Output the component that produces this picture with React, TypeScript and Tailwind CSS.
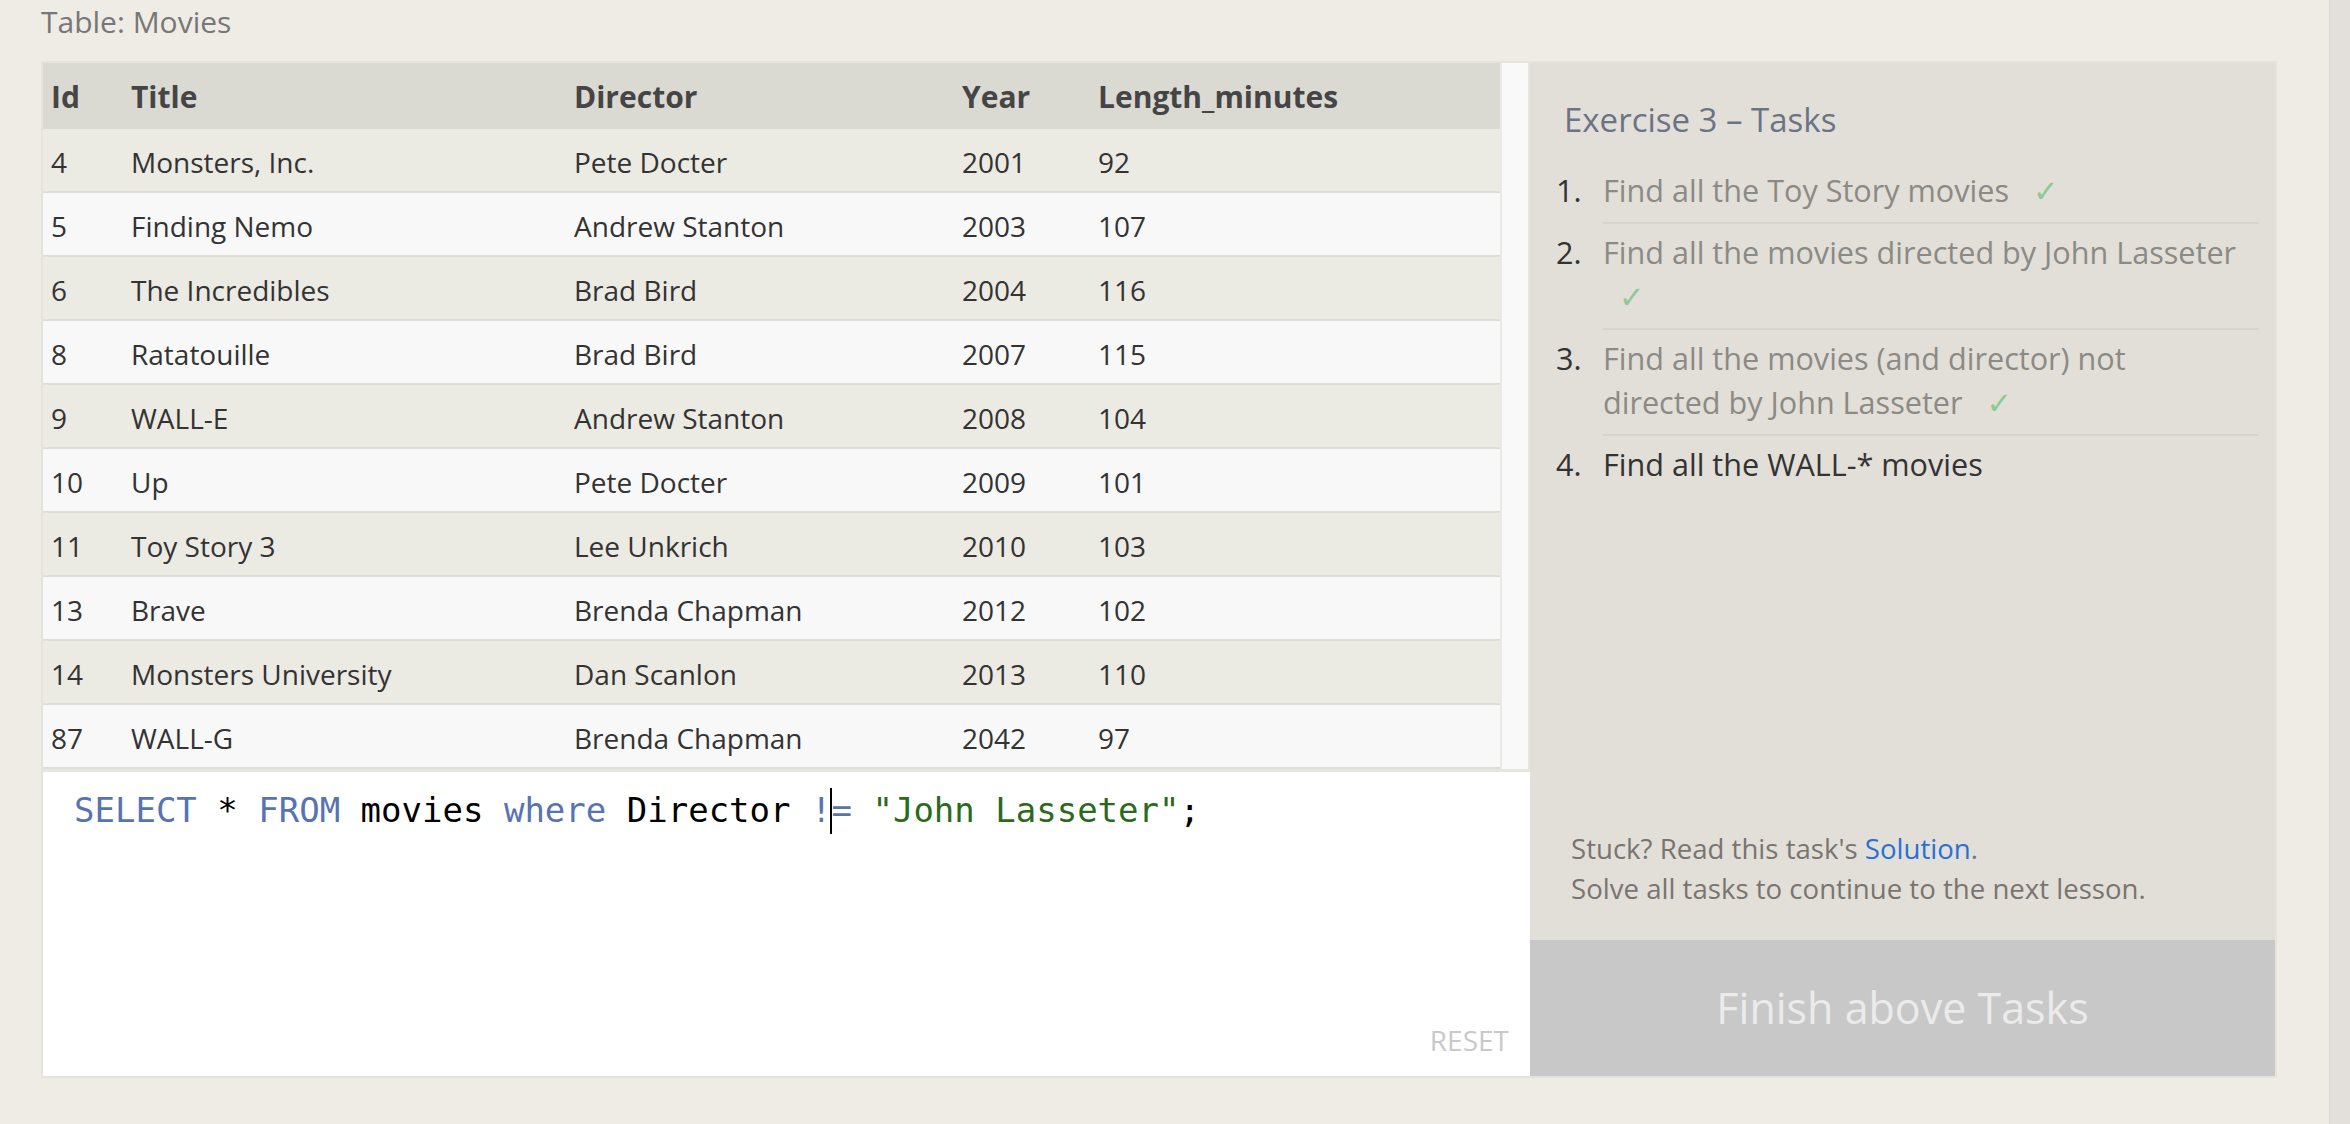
import React from 'react';

const sans = { fontFamily: '"Open Sans", "Noto Sans", sans-serif' };

const movies = [
  { id: 4, title: 'Monsters, Inc.', director: 'Pete Docter', year: 2001, len: 92 },
  { id: 5, title: 'Finding Nemo', director: 'Andrew Stanton', year: 2003, len: 107 },
  { id: 6, title: 'The Incredibles', director: 'Brad Bird', year: 2004, len: 116 },
  { id: 8, title: 'Ratatouille', director: 'Brad Bird', year: 2007, len: 115 },
  { id: 9, title: 'WALL-E', director: 'Andrew Stanton', year: 2008, len: 104 },
  { id: 10, title: 'Up', director: 'Pete Docter', year: 2009, len: 101 },
  { id: 11, title: 'Toy Story 3', director: 'Lee Unkrich', year: 2010, len: 103 },
  { id: 13, title: 'Brave', director: 'Brenda Chapman', year: 2012, len: 102 },
  { id: 14, title: 'Monsters University', director: 'Dan Scanlon', year: 2013, len: 110 },
  { id: 87, title: 'WALL-G', director: 'Brenda Chapman', year: 2042, len: 97 },
];

const tasks = [
  { text: 'Find all the Toy Story movies', done: true },
  { text: 'Find all the movies directed by John Lasseter', done: true },
  { text: 'Find all the movies (and director) not directed by John Lasseter', done: true },
  { text: 'Find all the WALL-* movies', done: false },
];

function MoviesTable() {
  return (
    <div className="w-[1457px] shrink-0 text-[28px] text-[#333]">
      <div className="grid h-[66px] grid-cols-[80px_443px_388px_136px_1fr] items-center bg-[#dbdad2] text-[30px] font-bold text-[#454545]">
        <div className="pl-[8px]">Id</div>
        <div className="pl-[8px]">Title</div>
        <div className="pl-[8px]">Director</div>
        <div className="pl-[8px]">Year</div>
        <div className="pl-[8px]">Length_minutes</div>
      </div>
      {movies.map((m, i) => (
        <div
          key={m.id}
          className={
            'grid h-[64px] grid-cols-[80px_443px_388px_136px_1fr] items-center border-b-2 border-[#dfded8] pt-[4px] ' +
            (i % 2 === 0 ? 'bg-[#ebeae3]' : 'bg-[#f8f8f8]')
          }
        >
          <div className="pl-[8px]">{m.id}</div>
          <div className="pl-[8px]">{m.title}</div>
          <div className="pl-[8px]">{m.director}</div>
          <div className="pl-[8px]">{m.year}</div>
          <div className="pl-[8px]">{m.len}</div>
        </div>
      ))}
    </div>
  );
}

function Editor() {
  return (
    <div className="flex flex-1 flex-col border-t-[3px] border-[#e6e5de] bg-white">
      <div
        className="pl-[31px] pt-[14px] text-[34px] leading-[48px] whitespace-pre text-black"
        style={{ fontFamily: '"DejaVu Sans Mono", monospace' }}
      >
        <span className="text-[#5873b3]">SELECT</span> * <span className="text-[#5873b3]">FROM</span> movies{' '}
        <span className="text-[#5873b3]">where</span> Director <span className="text-[#5873b3]">!</span>
        <span className="relative inline-block h-[48px] w-0 align-top">
          <span className="absolute left-[-1px] top-[2px] h-[46px] w-[2px] bg-black" />
        </span>
        <span className="text-[#5873b3]">=</span> <span className="text-[#2b6a1d]">"John Lasseter"</span>;
      </div>
      <div className="mt-auto self-end pr-[21px] pb-[17px] text-[28px] leading-[38px] text-[#c9c9c9]">RESET</div>
    </div>
  );
}

function TaskPanel() {
  return (
    <div className="flex w-[745px] shrink-0 flex-col bg-[#e1dfd8]">
      <div className="pl-[34px] pt-[35px] text-[33px] leading-[44px] text-[#6c7384]">Exercise 3 – Tasks</div>
      <ol className="mt-[20px] pr-[16px]">
        {tasks.map((t, i) => (
          <li key={i} className="flex text-[30.6px] leading-[44px]">
            <span className="w-[73px] shrink-0 pt-[6px] pl-[26px] text-[#333]">{i + 1}.</span>
            <div
              className={
                'flex-1 pt-[6px] pb-[10px] pr-[16px] ' +
                (i < tasks.length - 1 ? 'border-b-2 border-[#d6d4cb] ' : '') +
                (t.done ? 'text-[#8b8a85]' : 'text-[#333]')
              }
            >
              {t.text}
              {t.done && (
                <>
                  {' '}
                  <span
                    className="ml-[16px] leading-[20px] text-[#8fca90]"
                    style={{ fontFamily: '"DejaVu Sans", sans-serif' }}
                  >
                    ✓
                  </span>
                </>
              )}
            </div>
          </li>
        ))}
      </ol>
      <div className="mt-auto pl-[41px] pb-[32px] text-[27.6px] leading-[40px] text-[#7a7471]">
        <div>
          Stuck? Read this task's <span className="text-[#2a6fd6]">Solution</span>.
        </div>
        <div>Solve all tasks to continue to the next lesson.</div>
      </div>
      <div className="flex h-[136px] items-center justify-center bg-[#c8c8c8] text-[43px] text-[#ebebeb]">
        Finish above Tasks
      </div>
    </div>
  );
}

export default function App() {
  return (
    <div className="flex h-[1124px] overflow-hidden bg-[#efece5]" style={sans}>
      <main className="flex-1 pl-[41px]">
        <div className="pt-[2px] mb-[19px] text-[30px] leading-[40px] text-[#777]">Table: Movies</div>
        <div className="flex h-[1017px] w-[2236px] border-2 border-[#e5e3dc]">
          <div className="flex w-[1487px] shrink-0 flex-col">
            <div className="flex h-[706px] overflow-hidden">
              <MoviesTable />
              <div className="w-[2px] bg-[#e9e9e6]" />
              <div className="w-[26px] bg-[#f9f9fa]" />
              <div className="w-[2px] bg-[#e6e5df]" />
            </div>
            <Editor />
          </div>
          <TaskPanel />
        </div>
      </main>
      <div className="w-[21px] shrink-0 border-l border-[#dcd9d4] bg-[#e3e0dc]" />
    </div>
  );
}
